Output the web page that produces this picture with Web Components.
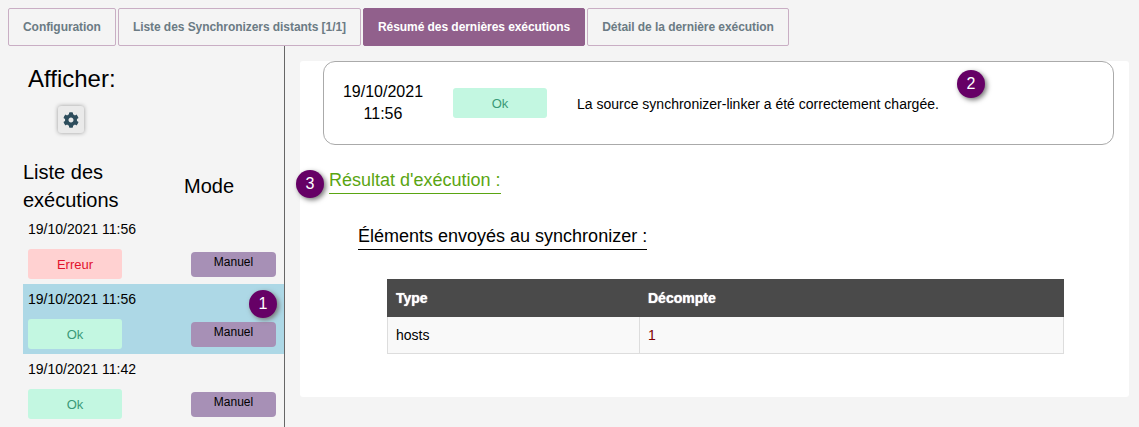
<!DOCTYPE html>
<html lang="fr">
<head>
<meta charset="utf-8">
<title>Synchronizer</title>
<style>
html, body { margin: 0; height: 100%; overflow: hidden; }
body { background: #f4f4f4; font-family: "Liberation Sans", Arial, sans-serif; color: #000; }
</style>
</head>
<body>
<sync-page></sync-page>

<script>
class StepBadge extends HTMLElement {
    constructor() {
        super()
        this.attachShadow({ mode: 'open' })
        this.shadowRoot.innerHTML = `
            <style>
            :host {
                position: absolute;
                display: flex;
                align-items: center;
                justify-content: center;
                width: 28px;
                height: 28px;
                border-radius: 50%;
                background: #660066;
                color: #fff;
                font-size: 16px;
                box-shadow: 2px 2px 5px #777;
            }
            </style>
            <slot></slot>
        `
    }
}
customElements.define('step-badge', StepBadge)

class TabBar extends HTMLElement {
    constructor() {
        super()
        this.attachShadow({ mode: 'open' })
        const tabs = ['Configuration', 'Liste des Synchronizers distants [1/1]', 'Résumé des dernières exécutions', 'Détail de la dernière exécution']
        this.shadowRoot.innerHTML = `
            <style>
            :host { display: flex; gap: 2px; padding: 8px 0 0 8px; height: 38px; }
            .tab {
                box-sizing: border-box;
                display: flex;
                align-items: center;
                height: 38px;
                padding: 0 14px;
                background: #f4f4f4;
                border: 1px solid #c9aec4;
                border-radius: 2px;
                color: #6b7b84;
                font-size: 12px;
                font-weight: bold;
                letter-spacing: -0.06px;
                white-space: nowrap;
            }
            .tab.active { background: #91608c; border-color: #91608c; color: #fff; }
            </style>
            ${tabs.map((t, i) => `<div class="tab ${i == 2 ? 'active' : ''}">${t}</div>`).join('')}
        `
    }
}
customElements.define('tab-bar', TabBar)

class StatusPill extends HTMLElement {
    constructor() {
        super()
        this.attachShadow({ mode: 'open' })
        this.shadowRoot.innerHTML = `
            <style>
            :host {
                display: flex;
                align-items: center;
                justify-content: center;
                width: 94px;
                height: 30px;
                border-radius: 3px;
                font-size: 13px;
                background: #c3f7e1;
                color: #3a9a78;
            }
            :host([kind="error"]) { background: #ffd1d1; color: #e2112c; }
            </style>
            <slot></slot>
        `
    }
}
customElements.define('status-pill', StatusPill)

class ExecRow extends HTMLElement {
    constructor() {
        super()
        this.attachShadow({ mode: 'open' })
        this.shadowRoot.innerHTML = `
            <style>
            :host {
                position: relative;
                box-sizing: border-box;
                display: block;
                height: 70px;
                padding: 7px 8px 0 5px;
            }
            :host([selected]) { background: #add8e6; }
            .date { font-size: 14px; line-height: 16px; height: 28px; }
            .line { display: flex; justify-content: space-between; align-items: flex-end; }
            .mode {
                box-sizing: border-box;
                width: 85px;
                height: 25px;
                padding-top: 3px;
                margin-bottom: 2px;
                border-radius: 4px;
                background: #a790b6;
                font-size: 12px;
                line-height: 14px;
                text-align: center;
            }
            </style>
            <div class="date"></div>
            <div class="line">
                <status-pill></status-pill>
                <div class="mode">Manuel</div>
            </div>
            <slot></slot>
        `
    }

    connectedCallback() {
        this.shadowRoot.querySelector('.date').textContent = this.getAttribute('date')
        const pill = this.shadowRoot.querySelector('status-pill')
        const status = this.getAttribute('status')
        pill.textContent = status
        if (status == 'Erreur')
            pill.setAttribute('kind', 'error')
    }
}
customElements.define('exec-row', ExecRow)

class ExecSidebar extends HTMLElement {
    constructor() {
        super()
        this.attachShadow({ mode: 'open' })
        this.shadowRoot.innerHTML = `
            <style>
            :host {
                box-sizing: border-box;
                display: block;
                flex: none;
                width: 285px;
                padding: 18px 0 0 23px;
                border-right: 1px solid #666;
                overflow: hidden;
            }
            h2 { margin: 0 0 0 5px; font-size: 24px; font-weight: normal; line-height: 30px; }
            .gear {
                display: flex;
                align-items: center;
                justify-content: center;
                width: 26px;
                height: 27px;
                margin: 12px 0 0 35px;
                background: #eaeaea;
                border-radius: 3px;
                box-shadow: 0 0 4px #999;
            }
            svg { width: 16px; height: 16px; fill: #2d4d5c; display: block; }
            .heads { display: flex; align-items: center; margin-top: 25px; font-size: 20px; line-height: 28px; }
            .heads div:first-child { width: 161px; }
            </style>
            <h2>Afficher:</h2>
            <div class="gear">
                <svg viewBox="0 0 512 512"><path d="M487.4 315.7l-42.6-24.6c4.3-23.2 4.3-47 0-70.2l42.6-24.6c4.9-2.8 7.1-8.6 5.5-14-11.1-35.6-30-67.8-54.7-94.6-3.8-4.1-10-5.1-14.8-2.3L380.8 110c-17.9-15.4-38.5-27.3-60.8-35.1V25.8c0-5.6-3.9-10.5-9.4-11.7-36.7-8.2-74.3-7.8-109.2 0-5.5 1.2-9.4 6.1-9.4 11.7V75c-22.2 7.9-42.8 19.8-60.8 35.1L88.7 85.5c-4.9-2.8-11-1.9-14.8 2.3-24.7 26.7-43.6 58.9-54.7 94.6-1.7 5.4.6 11.2 5.5 14L67.3 221c-4.3 23.2-4.3 47 0 70.2l-42.6 24.6c-4.9 2.8-7.1 8.6-5.5 14 11.1 35.6 30 67.8 54.7 94.6 3.8 4.1 10 5.1 14.8 2.3l42.6-24.6c17.9 15.4 38.5 27.3 60.8 35.1v49.2c0 5.6 3.9 10.5 9.4 11.7 36.7 8.2 74.3 7.8 109.2 0 5.5-1.2 9.4-6.1 9.4-11.7v-49.2c22.2-7.9 42.8-19.8 60.8-35.1l42.6 24.6c4.9 2.8 11 1.9 14.8-2.3 24.7-26.7 43.6-58.9 54.7-94.6 1.5-5.5-.7-11.3-5.6-14.1zM256 336c-44.1 0-80-35.9-80-80s35.9-80 80-80 80 35.9 80 80-35.9 80-80 80z"/></svg>
            </div>
            <div class="heads">
                <div>Liste des exécutions</div>
                <div>Mode</div>
            </div>
            <slot></slot>
        `
    }
}
customElements.define('exec-sidebar', ExecSidebar)

class SummaryBox extends HTMLElement {
    constructor() {
        super()
        this.attachShadow({ mode: 'open' })
        this.shadowRoot.innerHTML = `
            <style>
            :host {
                position: relative;
                box-sizing: border-box;
                display: flex;
                align-items: flex-start;
                height: 84px;
                margin: 0 15px 0 23px;
                padding: 19px 0 0 0;
                border: 1px solid #aaa;
                border-radius: 12px;
            }
            .when { width: 118px; font-size: 16px; line-height: 22px; text-align: center; }
            status-pill { margin: 7px 0 0 11px; }
            .msg { margin: 15px 0 0 30px; font-size: 14px; line-height: 16px; }
            </style>
            <div class="when">19/10/2021<br>11:56</div>
            <status-pill>Ok</status-pill>
            <div class="msg">La source synchronizer-linker a été correctement chargée.</div>
            <slot></slot>
        `
    }
}
customElements.define('summary-box', SummaryBox)

class CountTable extends HTMLElement {
    constructor() {
        super()
        this.attachShadow({ mode: 'open' })
        this.shadowRoot.innerHTML = `
            <style>
            :host { display: block; width: 677px; margin: 29px 0 0 87px; }
            table { width: 100%; border-collapse: separate; border-spacing: 0; table-layout: fixed; font-size: 14px; }
            th {
                height: 38px;
                padding: 0 9px;
                background: #4a4a4a;
                color: #fff;
                text-align: left;
                text-shadow: 0 0 1px #fff;
            }
            th + th { padding-left: 9px; }
            td {
                height: 36px;
                padding: 0 8px;
                background: #f9f9f9;
                border: solid #ddd;
                border-width: 0 1px 1px 1px;
            }
            td + td { border-left-width: 1px; }
            td:first-child { border-right-width: 0; }
            .num { color: #800000; }
            </style>
            <table>
                <colgroup><col style="width:252px"><col></colgroup>
                <tr><th>Type</th><th>Décompte</th></tr>
                <tr><td>hosts</td><td class="num">1</td></tr>
            </table>
        `
    }
}
customElements.define('count-table', CountTable)

class ResultPanel extends HTMLElement {
    constructor() {
        super()
        this.attachShadow({ mode: 'open' })
        this.shadowRoot.innerHTML = `
            <style>
            :host {
                position: relative;
                box-sizing: border-box;
                display: block;
                flex: none;
                width: 829px;
                height: 336px;
                margin: 15px 0 0 15px;
                background: #fff;
                border-radius: 3px;
            }
            .title {
                display: inline-block;
                font-size: 18px;
                font-weight: normal;
                line-height: 22px;
                margin: 0;
                padding-bottom: 2px;
                border-bottom: 1px solid;
            }
            .result { margin: 24px 0 0 29px; color: #5aa512; }
            .sent { display: block; width: fit-content; margin: 31px 0 0 58px; color: #000; }
            </style>
            <summary-box><step-badge style="left:633px;top:8px">2</step-badge></summary-box>
            <h3 class="title result">Résultat d'exécution :</h3>
            <step-badge style="left:-4px;top:109px">3</step-badge>
            <h3 class="title sent">Éléments envoyés au synchronizer :</h3>
            <count-table></count-table>
        `
    }
}
customElements.define('result-panel', ResultPanel)

class SyncPage extends HTMLElement {
    constructor() {
        super()
        this.attachShadow({ mode: 'open' })
        this.shadowRoot.innerHTML = `
            <style>
            :host { display: block; height: 427px; overflow: hidden; }
            main { display: flex; height: 381px; }
            </style>
            <tab-bar></tab-bar>
            <main>
                <exec-sidebar>
                    <exec-row date="19/10/2021 11:56" status="Erreur"></exec-row>
                    <exec-row date="19/10/2021 11:56" status="Ok" selected>
                        <step-badge style="left:226px;top:6px">1</step-badge>
                    </exec-row>
                    <exec-row date="19/10/2021 11:42" status="Ok"></exec-row>
                </exec-sidebar>
                <result-panel></result-panel>
            </main>
        `
    }
}
customElements.define('sync-page', SyncPage)
</script>
</body>
</html>
